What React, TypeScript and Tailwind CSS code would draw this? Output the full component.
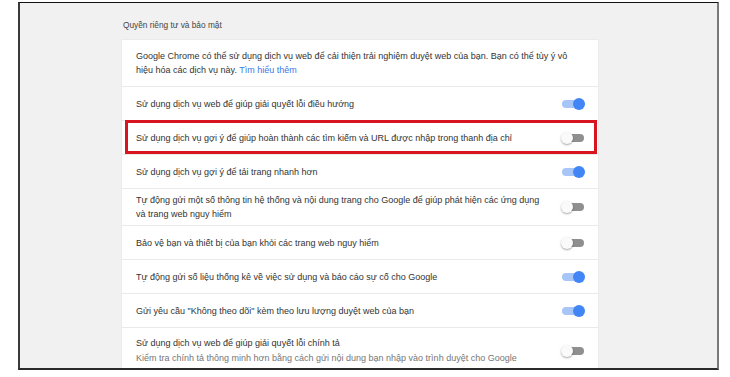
import React from "react";

function Toggle({ on }: { on: boolean }) {
  return (
    <div className="relative w-[24px] h-[12px] shrink-0">
      <div
        className={
          "absolute left-[1px] right-[1px] top-[2px] h-[8px] rounded-full " +
          (on ? "bg-[#a8c5f7]" : "bg-[#8f8f8f]")
        }
      />
      <div
        className={
          "absolute top-0 w-[12px] h-[12px] rounded-full " +
          (on
            ? "right-0 bg-[#4285f4]"
            : "left-0 bg-[#fafafa] shadow-[0_1px_2px_rgba(0,0,0,0.35)]")
        }
      />
    </div>
  );
}

function Row({
  lines,
  sub,
  on,
  last,
  highlight,
}: {
  lines: string[];
  sub?: string;
  on: boolean;
  last?: boolean;
  highlight?: boolean;
}) {
  return (
    <div
      className={
        "relative flex items-center justify-between pl-[14px] pr-[13px] min-h-[34px] " +
        (sub ? "pt-[8px] pb-[6px] " : "py-[4px] ") +
        (last ? "" : "border-b border-[#e9e9e9]")
      }
    >
      <div className="leading-[14px]">
        {lines.map((l, i) => (
          <div key={i} className="text-[#333333] whitespace-nowrap">
            {l}
          </div>
        ))}
        {sub && <div className="mt-px text-[#767676] whitespace-nowrap">{sub}</div>}
      </div>
      <Toggle on={on} />
      {highlight && (
        <div className="absolute left-[3px] right-[1px] -top-px bottom-0 border-[3px] border-[#d7141f] pointer-events-none" />
      )}
    </div>
  );
}

export default function App() {
  return (
    <div
      className="w-[730px] h-[377px] bg-white overflow-hidden"
      style={{ fontFamily: '"Liberation Sans", Arial, sans-serif' }}
    >
      <div className="ml-[18px] mt-[2px] w-[701px] h-[368px] border-l-2 border-r-2 border-b-2 border-t border-l-[#3a3a3a] border-r-[#7a7a7a] border-b-[#2a2a2a] border-t-[#111] bg-[#f1f1f1] overflow-hidden">
        <div className="pl-[102px] pt-[15px] text-[9px]">
          <div className="ml-px leading-[14px] text-[#444] text-[8.3px]">
            Quyền riêng tư và bảo mật
          </div>
          <div className="mt-[8px] w-[476px] bg-white shadow-[0_0_1px_rgba(0,0,0,0.15)]">
            <div className="pl-[14px] pr-[13px] pt-[9px] pb-[9px] leading-[14px] text-[#333] text-[9px] border-b border-[#e9e9e9]">
              <div className="whitespace-nowrap">
                Google Chrome có thể sử dụng dịch vụ web để cải thiện trải nghiệm duyệt web của bạn. Bạn có thể tùy ý vô
              </div>
              <div className="whitespace-nowrap">
                hiệu hóa các dịch vụ này. <span className="text-[#3b78e7]">Tìm hiểu thêm</span>
              </div>
            </div>
            <Row lines={["Sử dụng dịch vụ web để giúp giải quyết lỗi điều hướng"]} on={true} />
            <Row
              lines={["Sử dụng dịch vụ gợi ý để giúp hoàn thành các tìm kiếm và URL được nhập trong thanh địa chỉ"]}
              on={false}
              highlight
            />
            <Row lines={["Sử dụng dịch vụ gợi ý để tải trang nhanh hơn"]} on={true} />
            <Row
              lines={[
                "Tự động gửi một số thông tin hệ thống và nội dung trang cho Google để giúp phát hiện các ứng dụng",
                "và trang web nguy hiểm",
              ]}
              on={false}
            />
            <Row lines={["Bảo vệ bạn và thiết bị của bạn khỏi các trang web nguy hiểm"]} on={false} />
            <Row lines={["Tự động gửi số liệu thống kê về việc sử dụng và báo cáo sự cố cho Google"]} on={true} />
            <Row lines={['Gửi yêu cầu "Không theo dõi" kèm theo lưu lượng duyệt web của bạn']} on={true} />
            <Row
              lines={["Sử dụng dịch vụ web để giúp giải quyết lỗi chính tả"]}
              sub="Kiểm tra chính tả thông minh hơn bằng cách gửi nội dung bạn nhập vào trình duyệt cho Google"
              on={false}
              last
            />
          </div>
        </div>
      </div>
    </div>
  );
}
